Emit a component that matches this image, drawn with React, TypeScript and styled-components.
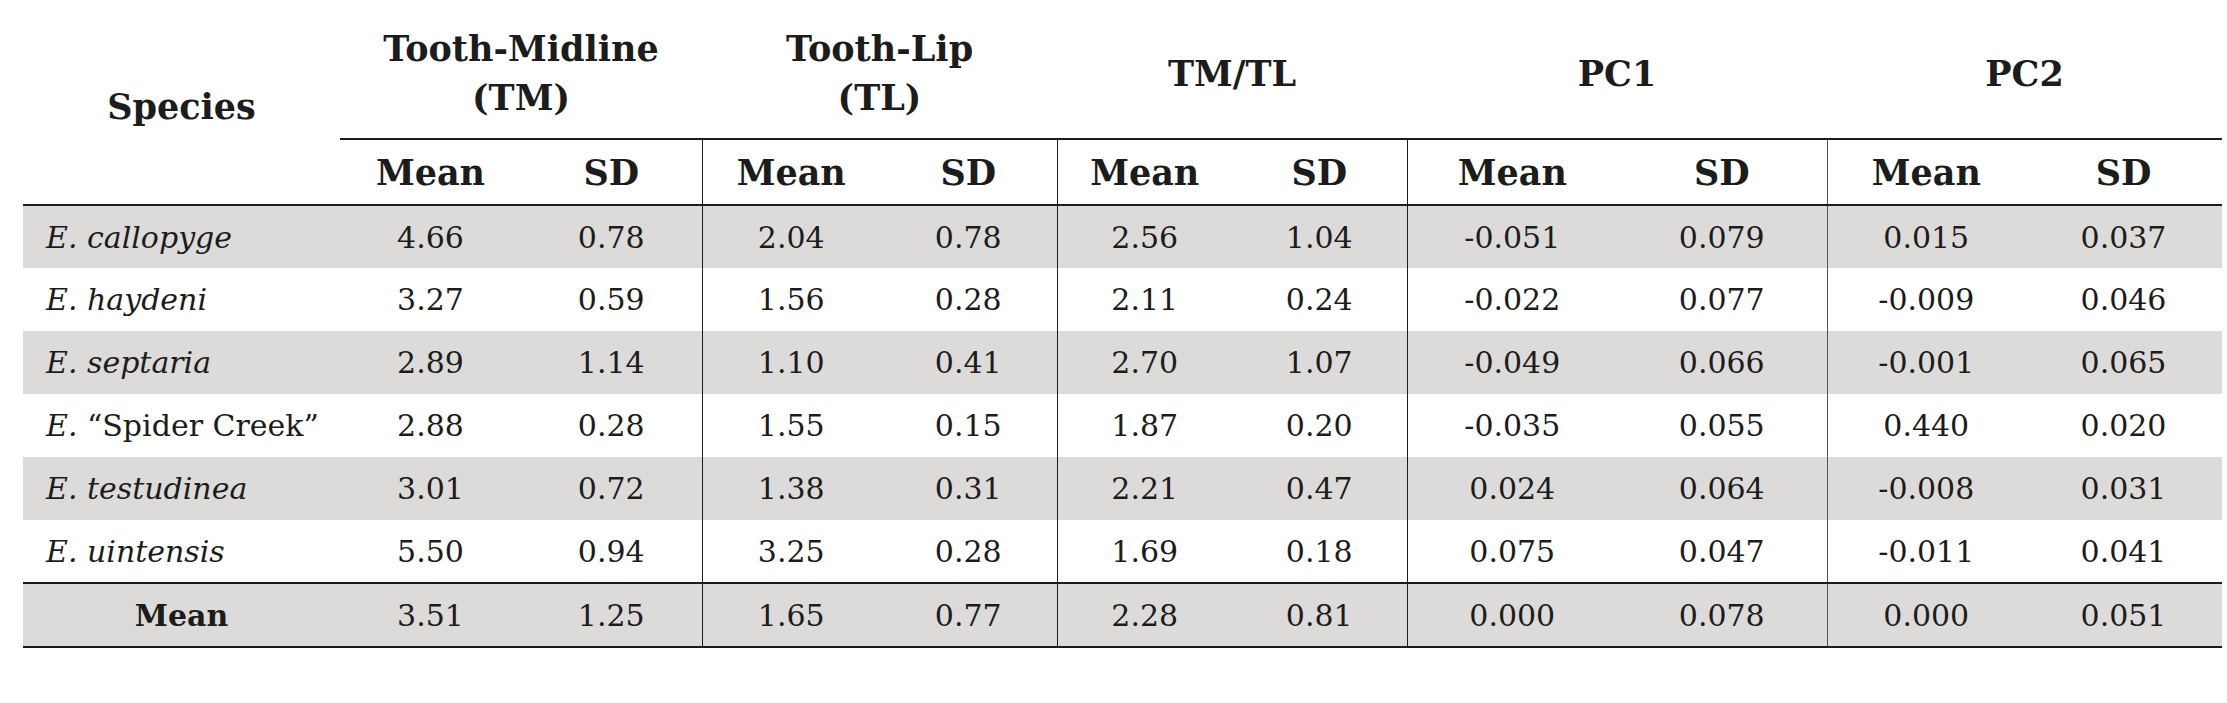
import React from 'react';
import styled, { createGlobalStyle } from 'styled-components';

const GlobalStyle = createGlobalStyle`
  html, body {
    margin: 0;
    padding: 0;
    background: #ffffff;
  }
`;

type Row = {
  species: string;
  quoted?: boolean;
  values: string[];
};

const groups = [
  { title: 'Tooth-Midline', sub: '(TM)' },
  { title: 'Tooth-Lip', sub: '(TL)' },
  { title: 'TM/TL' },
  { title: 'PC1' },
  { title: 'PC2' },
];

const colWidths = [317, 181, 181, 178, 177, 175, 175, 210, 210, 198, 197];

const rows: Row[] = [
  { species: 'callopyge', values: ['4.66', '0.78', '2.04', '0.78', '2.56', '1.04', '-0.051', '0.079', '0.015', '0.037'] },
  { species: 'haydeni', values: ['3.27', '0.59', '1.56', '0.28', '2.11', '0.24', '-0.022', '0.077', '-0.009', '0.046'] },
  { species: 'septaria', values: ['2.89', '1.14', '1.10', '0.41', '2.70', '1.07', '-0.049', '0.066', '-0.001', '0.065'] },
  { species: '\u201CSpider Creek\u201D', quoted: true, values: ['2.88', '0.28', '1.55', '0.15', '1.87', '0.20', '-0.035', '0.055', '0.440', '0.020'] },
  { species: 'testudinea', values: ['3.01', '0.72', '1.38', '0.31', '2.21', '0.47', '0.024', '0.064', '-0.008', '0.031'] },
  { species: 'uintensis', values: ['5.50', '0.94', '3.25', '0.28', '1.69', '0.18', '0.075', '0.047', '-0.011', '0.041'] },
];

const meanRow = ['3.51', '1.25', '1.65', '0.77', '2.28', '0.81', '0.000', '0.078', '0.000', '0.051'];

export default function App() {
  return (
    <>
      <GlobalStyle />
      <Page>
        <Table>
          <colgroup>
            {colWidths.map((w, i) => (
              <col key={i} style={{ width: w }} />
            ))}
          </colgroup>
          <thead>
            <tr>
              <SpeciesHead rowSpan={2}>Species</SpeciesHead>
              {groups.map((g) => (
                <GroupHead key={g.title} colSpan={2}>
                  {g.title}
                  {g.sub && (
                    <>
                      <br />
                      {g.sub}
                    </>
                  )}
                </GroupHead>
              ))}
            </tr>
            <tr>
              {groups.map((g, gi) =>
                ['Mean', 'SD'].map((label, li) => (
                  <SubHead key={g.title + label} $divider={li === 0 && gi > 0} $light={gi === 4 && li === 0}>
                    {label}
                  </SubHead>
                )),
              )}
            </tr>
          </thead>
          <tbody>
            {rows.map((r, ri) => (
              <BodyRow key={r.species} $shade={ri % 2 === 0}>
                <SpeciesCell>
                  <em>E.</em> {r.quoted ? r.species : <em>{r.species}</em>}
                </SpeciesCell>
                {r.values.map((v, vi) => (
                  <NumCell key={vi} $divider={vi % 2 === 0 && vi > 0} $light={vi === 8}>
                    {v}
                  </NumCell>
                ))}
              </BodyRow>
            ))}
            <MeanRow>
              <MeanLabel>Mean</MeanLabel>
              {meanRow.map((v, vi) => (
                <NumCell key={vi} $divider={vi % 2 === 0 && vi > 0} $light={vi === 8}>
                  {v}
                </NumCell>
              ))}
            </MeanRow>
          </tbody>
        </Table>
      </Page>
    </>
  );
}

const Page = styled.div`
  padding: 8px 5px 0 23px;
  font-family: 'DejaVu Serif', 'Liberation Serif', serif;
  color: #1c1c1c;
`;

const Table = styled.table`
  border-collapse: collapse;
  table-layout: fixed;
  width: 2199px;
`;

const SpeciesHead = styled.th`
  padding: 0;
  font-size: 35px;
  font-weight: 700;
  text-align: center;
  vertical-align: middle;
  border-bottom: 2px solid #1c1c1c;
`;

const GroupHead = styled.th`
  height: 130px;
  padding: 0;
  font-size: 35px;
  font-weight: 700;
  line-height: 49px;
  text-align: center;
  vertical-align: middle;
  border-bottom: 2px solid #1c1c1c;
`;

const SubHead = styled.th<{ $divider?: boolean; $light?: boolean }>`
  height: 64px;
  padding: 0;
  font-size: 35px;
  font-weight: 700;
  text-align: center;
  vertical-align: middle;
  border-bottom: 2px solid #1c1c1c;
  border-left: ${(p) => (p.$divider ? `1px solid ${p.$light ? '#555' : '#1c1c1c'}` : 'none')};
`;

const BodyRow = styled.tr<{ $shade?: boolean }>`
  height: 63px;
  background: ${(p) => (p.$shade ? '#dcdbda' : '#ffffff')};
`;

const MeanRow = styled.tr`
  height: 64px;
  background: #dcdbda;
  border-top: 2px solid #1c1c1c;
  border-bottom: 2px solid #1c1c1c;
`;

const SpeciesCell = styled.td`
  padding: 0 0 0 23px;
  font-size: 30px;
  text-align: left;
  white-space: nowrap;
  vertical-align: middle;

  em {
    font-style: italic;
  }
`;

const MeanLabel = styled.td`
  padding: 0;
  font-size: 30px;
  font-weight: 700;
  text-align: center;
  vertical-align: middle;
`;

const NumCell = styled.td<{ $divider?: boolean; $light?: boolean }>`
  padding: 0;
  font-size: 30px;
  text-align: center;
  vertical-align: middle;
  border-left: ${(p) => (p.$divider ? `1px solid ${p.$light ? '#555' : '#1c1c1c'}` : 'none')};
`;
